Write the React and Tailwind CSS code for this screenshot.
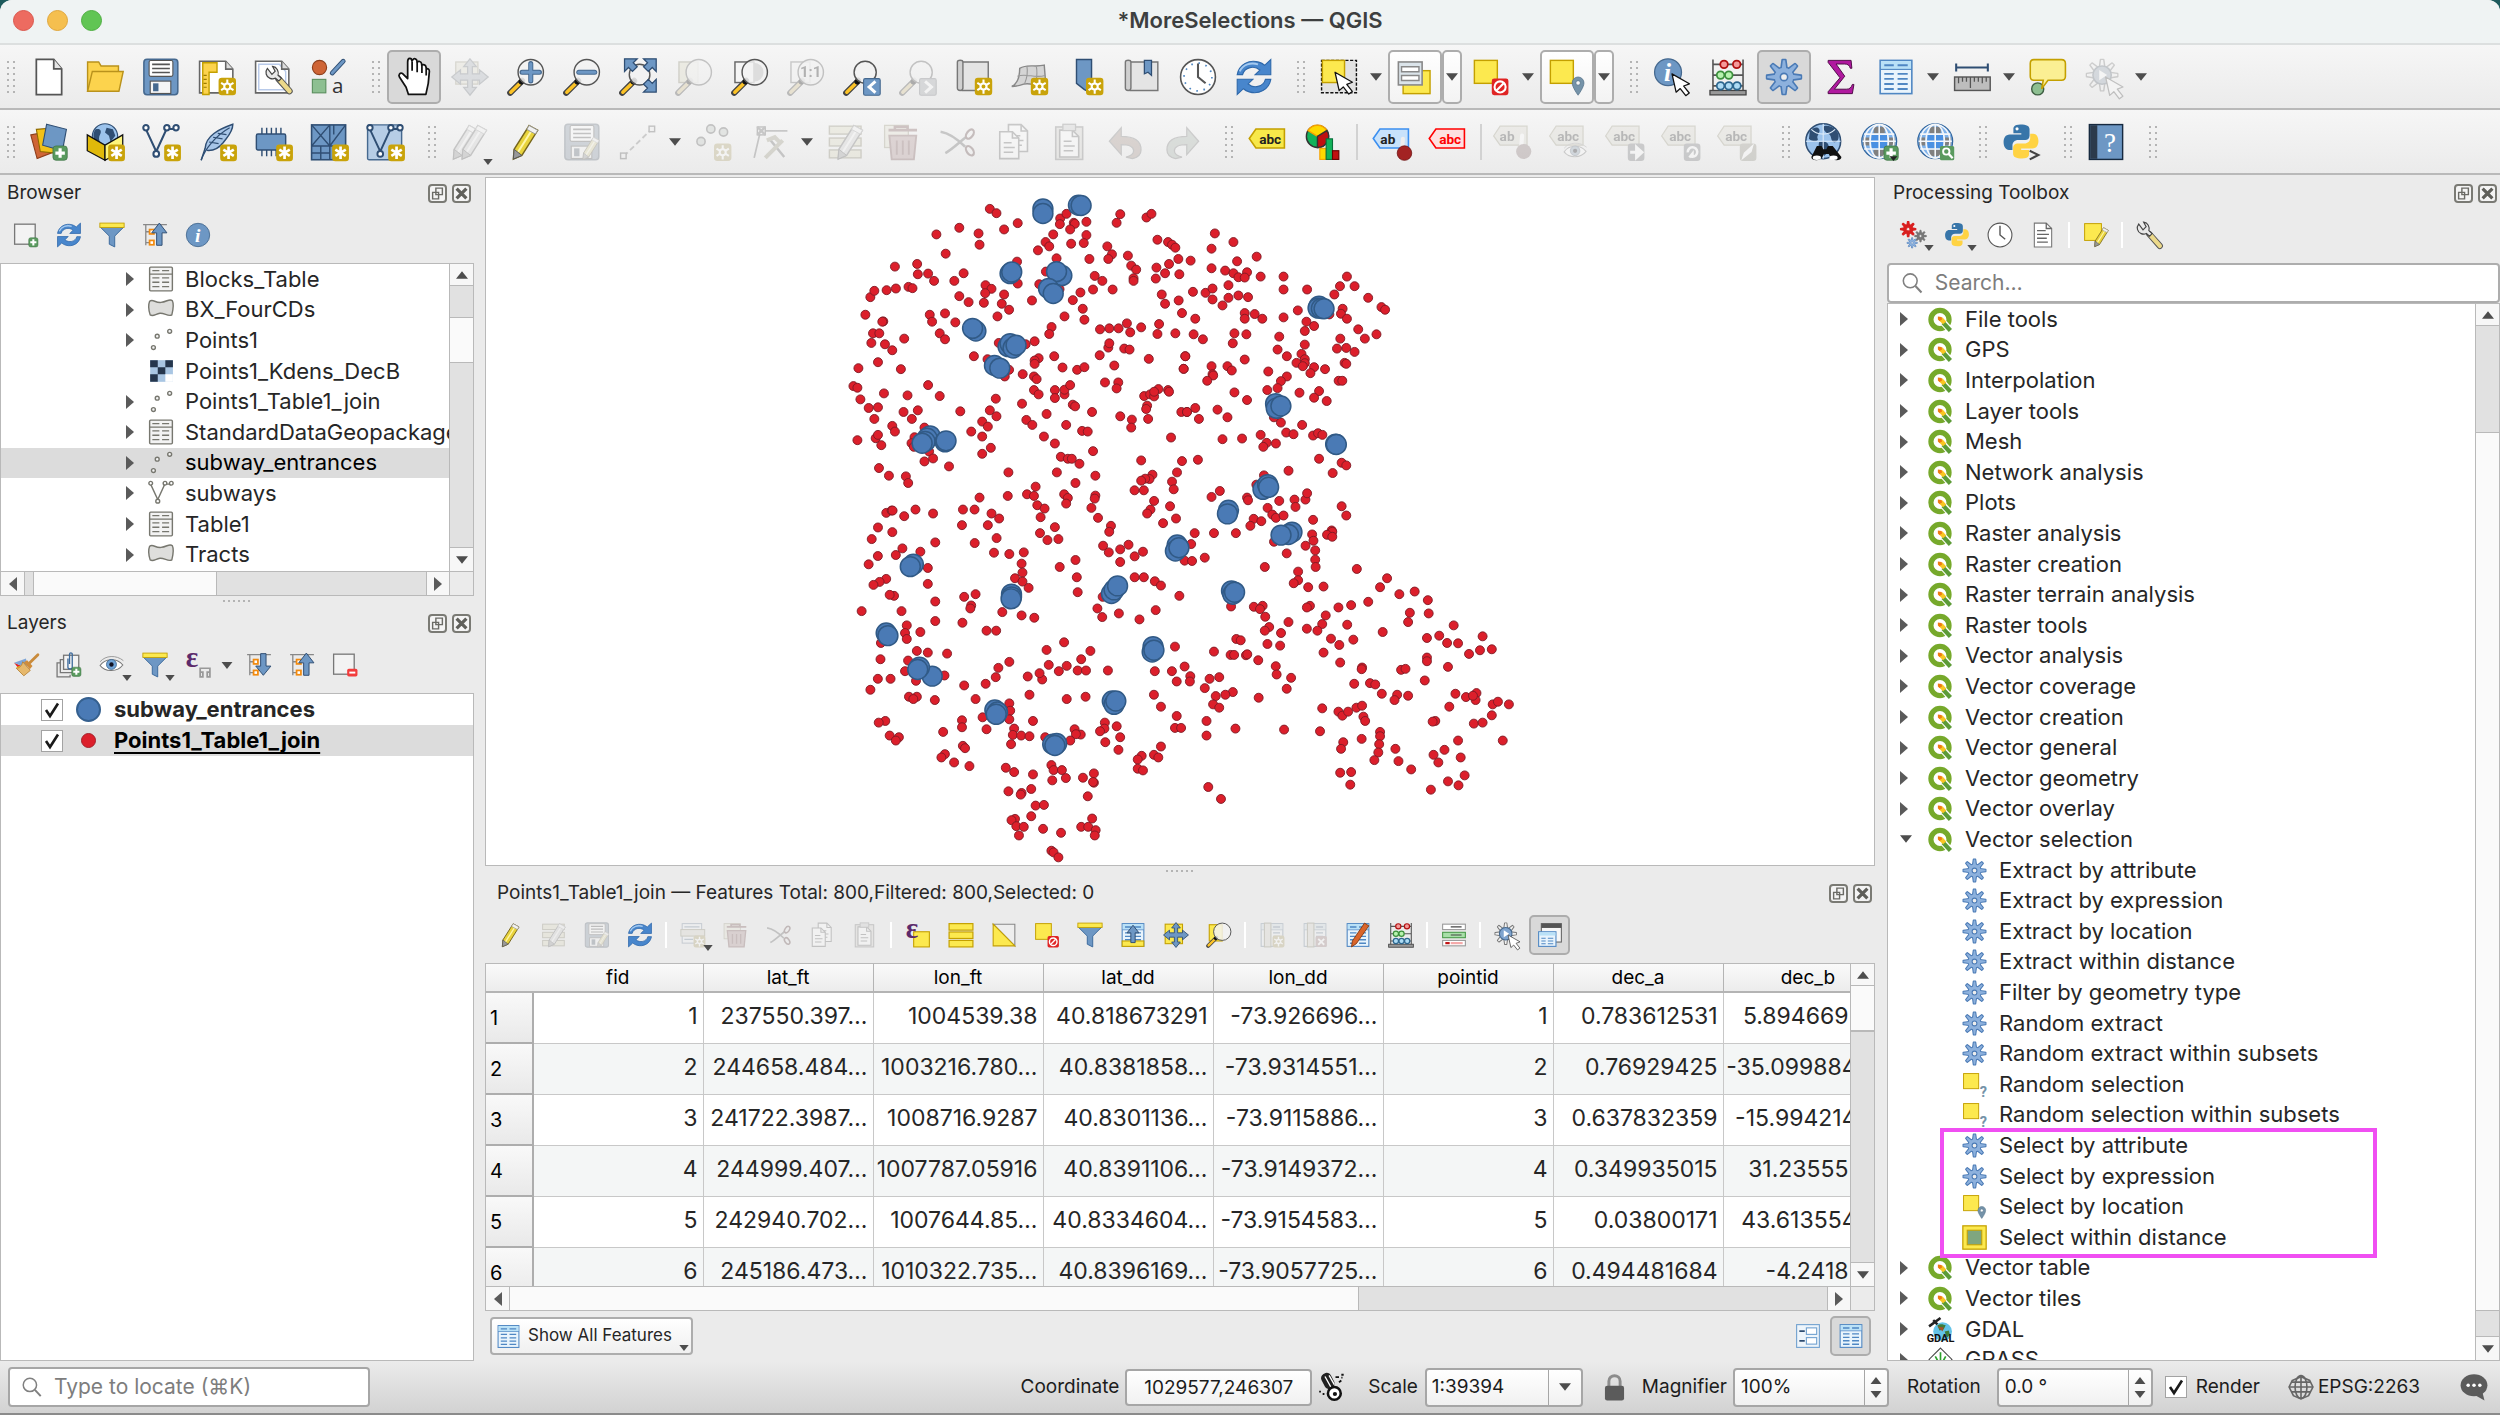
import React from "react";
import clsx from "clsx";

const BLUE = "#6d97c4";
const NAVY = "#2f4e73";
const YELLOW = "#fce94f";
const GOLD = "#c4a000";

// small marks that sit in the corner of other icons
const NewBadge = ({ x = 13, y = 13 }) => (
  <g transform={`translate(${x} ${y})`}>
    <rect width="10.6" height="10.6" rx="2" fill="#c9a30a" />
    <path d="M5.3 1.4v7.8M2 3.3l6.6 4M2 7.3l6.6-4" stroke="#fff" strokeWidth="1.7" />
  </g>
);

const AddBadge = ({ x = 14, y = 14, s = 1 }) => (
  <g transform={`translate(${x} ${y}) scale(${s})`}>
    <rect width="9.5" height="9.5" rx="2" fill="#5a9a5f" stroke="#3f7545" strokeWidth="0.5" />
    <path d="M4.75 1.6v6.3M1.6 4.75h6.3" stroke="#fff" strokeWidth="2.1" />
  </g>
);

const StarBadge = ({ x = 12.5, y = 12.5 }) => (
  <g transform={`translate(${x} ${y})`}>
    <rect width="11" height="11" rx="2" fill="#c9a30a" />
    <circle cx="5.5" cy="5.5" r="1.9" fill="none" stroke="#fff" strokeWidth="1.3" />
    <path d="M5.5 1v2.6M5.5 7.4V10M1.6 3.2l2.3 1.4M7.1 6.4l2.3 1.4M1.6 7.8l2.3-1.4M7.1 4.6l2.3-1.4" stroke="#fff" strokeWidth="1.3" />
  </g>
);

const Lens = ({ cx = 15, cy = 9, r = 8, children }) => (
  <g>
    <path d="M9.6 14.4L2 22" stroke="#444" strokeWidth="3.8" strokeLinecap="round" />
    <path d="M7.6 16.6L2.4 21.6" stroke="#fcc327" strokeWidth="2.2" strokeLinecap="round" />
    <circle cx="9" cy="15" r="1.7" fill="#111" />
    <circle cx={cx} cy={cy} r={r} fill="#f2f2f2" fillOpacity="0.85" stroke="#555" strokeWidth="0.9" />
    {children}
  </g>
);

const Pencil = () => (
  <g>
    <path d="M14 1.6l5.4 3L9.4 20.5 4 22.8l.5-6.2z" fill="#e8d33c" stroke="#77661c" strokeWidth="0.9" />
    <path d="M16.6 3L6.8 18.6" stroke="#fff6a8" strokeWidth="1.3" />
    <path d="M14 1.6l5.4 3-1.5 2.4-5.4-3z" fill="#f1f1f1" stroke="#999" strokeWidth="0.6" />
    <path d="M4.5 16.6l4.9 3.9L4 22.8z" fill="#999" stroke="#555" strokeWidth="0.6" />
  </g>
);

const Gear = ({ fill = "#8db1dd", stroke = "#4a7ab5" }) => {
  const teeth = [0, 45, 90, 135, 180, 225, 270, 315];
  return (
    <g>
      <g fill={stroke} stroke={stroke} strokeWidth="1.4" strokeLinejoin="round">
        {teeth.map((a) => (
          <path key={a} d="M10.2 7l.8-5.8h2l.8 5.8z" transform={`rotate(${a} 12 12)`} />
        ))}
        <circle cx="12" cy="12" r="6" />
      </g>
      <g fill={fill}>
        {teeth.map((a) => (
          <path key={a} d="M10.4 8l.9-6.6h1.4l.9 6.6z" transform={`rotate(${a} 12 12)`} />
        ))}
        <circle cx="12" cy="12" r="5.9" />
      </g>
      <circle cx="12" cy="12" r="2.3" fill="#eee" stroke={stroke} strokeWidth="1" />
    </g>
  );
};

const Cursor = ({ x = 11, y = 10, fill = "#fff", stroke = "#111" }) => (
  <path
    transform={`translate(${x} ${y})`}
    d="M0 0l2.6 11.6 2.6-2.3 3.5 4.5 2.2-1.7-3.5-4.4 3.6-1.4z"
    fill={fill}
    stroke={stroke}
    strokeWidth="0.8"
    strokeLinejoin="round"
  />
);

const LabelTag = ({ fill, stroke, color, text, tx = 14, children }) => (
  <g>
    <path d="M.8 9.8L5 3.800h18v12H5z" fill={fill} stroke={stroke} strokeWidth="1" />
    <text x={tx} y="13" fontSize="8.600" fontWeight="700" fontFamily="Roboto, sans-serif" textAnchor="middle" fill={color}>
      {text}
    </text>
    {children}
  </g>
);

const GreyTag = ({ text = "abc", tx = 12.2, children }) => (
  <g transform="translate(-2 0)">
    <path d="M.5 8.200L4.600 2h17v12h-17z" fill="#ddd8b8" stroke="#a39a5a" strokeWidth="0.800" />
    <text x={tx} y="11.200" fontSize="8.600" fontWeight="700" fontFamily="Roboto, sans-serif" textAnchor="middle" fill="#333">
      {text}
    </text>
    {children}
  </g>
);

const TableGlyph = ({ stroke = "#4f87c3", head = "#b9e1f7", fill = "#e9f4fc" }) => (
  <g>
    <rect x="2" y="1.5" width="20" height="21" fill={fill} stroke={stroke} strokeWidth="1" />
    <rect x="2.5" y="2" width="19" height="5" fill={head} />
    <path d="M2 7.2h20" stroke={stroke} strokeWidth="0.7" />
    <path d="M4.6 4.6h6M13 4.6h6.4M4.6 10h6M13 10h6.4M4.6 13.2h6M13 13.2h6.4M4.6 16.4h6M13 16.4h6.4M4.6 19.6h6M13 19.6h6.4" stroke={stroke} strokeWidth="1.2" />
  </g>
);

const Globe = ({ children }) => (
  <g>
    <circle cx="11.5" cy="11.5" r="11" fill="#7fb2ea" stroke="#33679f" strokeWidth="0.8" />
    <path d="M8 2.4h7v4.2H8zM8 16.8h7V21H8zM1.4 9.2h4v5h-4zM17.6 9.2h4v5h-4z" fill="#808080" />
    <rect x="6.5" y="7" width="10" height="9.4" fill="#4a90e2" />
    <g fill="none" stroke="#f3f6fa" strokeWidth="1">
      <ellipse cx="11.5" cy="11.5" rx="5.8" ry="10.6" />
      <ellipse cx="11.5" cy="11.5" rx="9.3" ry="10.6" />
      <path d="M11.5 1v21M2 7h19M1 11.5h21M2 16.4h19" />
    </g>
    {children}
  </g>
);

const Python = ({ children }) => (
  <g>
    <path d="M11.6 1C7.4 1 7.2 2.8 7.2 4v2.4h5v.9H4.9C2.2 7.3 1 9.6 1 12.2s1.3 4.8 3.4 4.8h2.2v-2.8c0-2 1.6-3.4 3.6-3.4h4.5c1.5 0 2.7-1.2 2.7-2.8V4c0-2-1.800-3-5.800-3z" fill="#3775a9" />
    <path d="M12.700 22.400c4.200 0 4.400-1.800 4.400-3V17h-5v-.9h7.200c2.600 0 3.700-2.200 3.700-4.700 0-2.600-1.200-4.600-3.300-4.600h-1.900v2.600c0 2-1.600 3.500-3.600 3.500H9.700c-1.500 0-2.700 1.200-2.700 2.700v3.800c0 2 1.800 3 5.700 3z" fill="#ffd343" />
    <circle cx="9.500" cy="3.700" r="1" fill="#fff" />
    {children}
  </g>
);

const Page = ({ x = 0, y = 0 }) => (
  <g transform={`translate(${x} ${y})`}>
    <path d="M2 1h8l4 4v13H2z" fill="#fff" stroke="#666" strokeWidth="1" />
    <path d="M10 1v4h4M4.500 8h5M4.500 11h7M4.500 14h6" fill="none" stroke="#666" strokeWidth="1" />
  </g>
);

const Floppy = ({ children }) => (
  <g>
    <rect x="1.200" y=".8" width="21.400" height="22.400" rx="2" fill={BLUE} stroke="#46698f" strokeWidth="1" />
    <rect x="4.500" y="1.600" width="15" height="10" rx="1" fill="#fff" stroke="#555" strokeWidth="0.700" />
    <path d="M6.400 4h11.200M6.400 6.600h11.200M6.400 9.200h11.200" stroke="#555" strokeWidth="1" />
    <rect x="5.200" y="14.600" width="13" height="7.800" fill="#f5f5f5" stroke="#555" strokeWidth="0.700" />
    <rect x="7" y="16" width="3.400" height="5" fill="#46698f" />
    {children}
  </g>
);

const Refresh = () => (
  <g fill="#4886cc" stroke="#2f69ab" strokeWidth="0.700">
    <path d="M1.400 10.500C2.500 4 9 .8 15 2.600c1.400.4 2.700 1.100 3.700 2L22.600 1v9.600h-9.900l3-3C12.400 4.600 6 5.600 4.800 10.500z" />
    <path d="M22.600 13.500C21.500 20 15 23.200 9 21.400c-1.400-.4-2.700-1.100-3.700-2L1.400 23v-9.600h9.900l-3 3c3.300 3 9.700 2 10.900-2.900z" />
    <path d="M3 8.500C5 4 10 2.600 14.500 4" stroke="#a5caf0" strokeWidth="1.200" fill="none" />
  </g>
);

const Funnel = ({ children }) => (
  <g>
    <path d="M1 4.500h22L14.500 13v10l-5-2.500V13z" fill={BLUE} stroke="#3c6a9c" strokeWidth="0.900" />
    <rect x=".8" y="1" width="22.400" height="4" fill={YELLOW} stroke={GOLD} strokeWidth="0.800" />
    {children}
  </g>
);

const Wrench = () => (
  <g>
    <path d="M11.500 10.500L20 20" stroke="#555" strokeWidth="5" strokeLinecap="round" />
    <path d="M12.500 11.500L20 20" stroke="#ecd98a" strokeWidth="3.500" strokeLinecap="round" />
    <path d="M3 2.500C1 5 1.800 9 5 10.200c1.500.6 3 .5 4.200-.2l2.600 2.200 2-2-2.600-2.400C12 5 10.500 1.400 7 1l2 3.600-2.500 2.600z" fill="#e8e8e8" stroke="#444" strokeWidth="0.900" />
  </g>
);

const Abacus = () => (
  <g>
    <path d="M2.500 1v20M21.500 1v20M2.500 4h19M2.500 10.800h19M2.500 17.600h19" stroke="#555" strokeWidth="1" />
    <rect x=".6" y="20.500" width="22.800" height="2.800" fill="#999" stroke="#444" strokeWidth="0.800" />
    <g fill="#f59a9a" stroke="#b01111" strokeWidth="1.100">
      <circle cx="9.500" cy="4" r="2.400" />
      <circle cx="17.500" cy="4" r="2.400" />
    </g>
    <g fill="#b7f2ae" stroke="#3c8f3c" strokeWidth="1.100">
      <circle cx="7.300" cy="10.800" r="2.400" />
      <circle cx="12.500" cy="10.800" r="2.400" />
    </g>
    <g fill="#aedcf5" stroke="#2d678f" strokeWidth="1.100">
      <circle cx="7.300" cy="17.600" r="2.400" />
      <circle cx="12.500" cy="17.600" r="2.400" />
      <circle cx="17.700" cy="17.600" r="2.400" />
    </g>
  </g>
);

const Trash = () => (
  <g>
    <rect x="1" y="1.500" width="15" height="14" fill="#e8e1b0" stroke="#a29a55" strokeWidth="0.800" />
    <path d="M7.500 4.500V2.400h8v2.100M3.500 4.500h18" stroke="#b04a4a" strokeWidth="1.600" fill="none" />
    <path d="M4 8h17l-1.500 15h-14z" fill="#d98888" stroke="#b04a4a" strokeWidth="1.200" />
    <path d="M8.700 11v9M12.500 11v9M16.300 11v9" stroke="#b04a4a" strokeWidth="1.200" />
  </g>
);

const Scissors = () => (
  <g fill="none" stroke="#666">
    <path d="M1 5.500c6 1 11 5 15.500 9.500M4 19c4-2 9-7 13.500-10.500" strokeWidth="1.600" />
    <ellipse cx="19.500" cy="7" rx="2" ry="3.300" transform="rotate(35 19.500 7)" stroke="#8a3a3a" strokeWidth="1.400" />
    <ellipse cx="19.500" cy="17.500" rx="2" ry="3.300" transform="rotate(-35 19.500 17.500)" stroke="#8a3a3a" strokeWidth="1.400" />
  </g>
);

const Bars = () => (
  <g fill="#e4dc92" stroke="#8f8544" strokeWidth="0.900">
    <rect x="1.500" y="2" width="20" height="5" />
    <rect x="1.500" y="9.500" width="20" height="5" />
    <rect x="1.500" y="17" width="20" height="5" />
  </g>
);

const NoEntry = ({ x = 13, y = 13 }) => (
  <g transform={`translate(${x} ${y})`}>
    <rect width="10.500" height="10.500" rx="1.500" fill="#e02424" />
    <circle cx="5.250" cy="5.250" r="3.500" fill="none" stroke="#fff" strokeWidth="1.300" />
    <path d="M3 7.500L7.500 3" stroke="#fff" strokeWidth="1.300" />
  </g>
);

const Pin = ({ x = 14, y = 12 }) => (
  <path
    transform={`translate(${x} ${y})`}
    d="M4 0a3.700 3.700 0 0 0-3.700 3.800C.3 6.500 4 11.500 4 11.500s3.700-5 3.700-7.700A3.700 3.700 0 0 0 4 0zm0 2.300a1.400 1.400 0 1 1 0 2.900 1.400 1.400 0 0 1 0-2.900z"
    fill="#7593a9"
    stroke="#56738a"
    strokeWidth="0.500"
  />
);

const TreeArrow = ({ down }) => (
  <g>
    <path d="M1 2.500h22M3.500 2.500v19M3.500 9h5M3.500 19h5" stroke="#888" strokeWidth="1.200" fill="none" />
    <rect x="7" y="7" width="4" height="4" fill="#fff" stroke="#f28a0e" strokeWidth="1.600" />
    <rect x="7" y="17" width="4" height="4" fill="#fff" stroke="#f28a0e" strokeWidth="1.600" />
    <path
      d={down ? "M13.500 1.500h5V13H23l-7 8.500L9 13h4.500z" : "M13.500 21.500h5V10H23L16 1 9 10h4.500z"}
      fill={BLUE}
      stroke={NAVY}
      strokeWidth="0.900"
    />
  </g>
);

const Eye = () => (
  <g>
    <path d="M1 12.500C5.500 6 16 5 22 12c-5 6.500-16 7-21 .5z" fill="#fff" stroke="#777" strokeWidth="1" />
    <circle cx="11.500" cy="11.500" r="4.600" fill="#6fa3d6" stroke="#355f8a" strokeWidth="0.700" />
    <circle cx="11.500" cy="11.500" r="2" fill="#112" />
    <path d="M1 9C6 3 16 2.500 22.500 8" fill="none" stroke="#999" strokeWidth="0.900" />
  </g>
);

const SelectBox = ({ w = 14.500 }) => <rect x="1.500" y="1.500" width={w} height={w} fill={YELLOW} stroke={GOLD} strokeWidth="0.900" />;

const VLine = ({ color = NAVY, w = 1.300 }) => (
  <g fill="none" stroke={color} strokeWidth={w}>
    <path d="M2.500 4L9 18l6.500-14.200h5" />
    <g fill="#fff">
      <circle cx="2.500" cy="3" r="1.700" />
      <circle cx="9" cy="19.500" r="1.800" />
      <circle cx="15.700" cy="3" r="1.700" />
      <circle cx="21.500" cy="3" r="1.700" />
    </g>
  </g>
);

const Clock = ({ ticks }) => (
  <g>
    <circle cx="12" cy="12" r="11" fill="#fff" stroke="#555" strokeWidth="1" />
    {ticks && <circle cx="12" cy="12" r="8.800" fill="none" stroke="#4f87c3" strokeWidth="1.100" strokeDasharray="1 3.608" />}
    <path d="M12 3.500V12l4.800 4" fill="none" stroke="#555" strokeWidth="1.300" />
  </g>
);

const ICONS = {
  newFile: (
    <g>
      <path d="M4 .8h11l5 6v16.400H4z" fill="#fff" stroke="#555" strokeWidth="1.100" />
      <path d="M15 .8v6h5" fill="#e5e5e5" stroke="#555" strokeWidth="1.100" />
    </g>
  ),
  open: (
    <g fill="#fcd34d" stroke="#b9921c" strokeWidth="0.900">
      <path d="M1 21V2.500h7L9.500 5h11v5" />
      <path d="M1 21L4 8.500h19.500L20.800 21z" />
    </g>
  ),
  save: <Floppy />,
  layout: (
    <g>
      <path d="M1 2h16.500L22 7v15H1z" fill="#fff" stroke="#666" strokeWidth="1" />
      <path d="M17.500 2v5H22" fill="#ddd" stroke="#666" />
      <path d="M3 3h9v6H7v14H3z" fill="#fcd34d" stroke={GOLD} strokeWidth="0.900" />
      <path d="M3.500 11H5.500M3.500 13.500H5.500M3.500 16H5.500M3.500 18.500H5.500" stroke="#9a7b00" strokeWidth="0.700" />
      <StarBadge x={13} />
    </g>
  ),
  manager: (
    <g>
      <path d="M1 2h16.500L22 7v15H1z" fill="#fff" stroke="#666" strokeWidth="1" />
      <path d="M3 4h13l4 4.500V20H3z" fill="none" stroke="#b8caea" strokeWidth="0.900" />
      <path d="M17.500 2v5H22" fill="#ddd" stroke="#666" />
      <g transform="translate(6 4.500) scale(.82)">
        <Wrench />
      </g>
    </g>
  ),
  style: (
    <g>
      <ellipse cx="6" cy="6" rx="4.500" ry="4.500" fill="#cf6536" stroke="#8e3f1c" strokeWidth="0.700" />
      <path d="M14 9.500L21 2" stroke={NAVY} strokeWidth="3" strokeLinecap="round" />
      <path d="M14 9.500L21 2" stroke={BLUE} strokeWidth="1.800" strokeLinecap="round" />
      <rect x="1.500" y="13.500" width="8.500" height="8.500" fill="#8dbf91" stroke="#5a8f5e" strokeWidth="0.700" />
      <text x="17.500" y="22" fontSize="13" fontFamily="Open Sans, sans-serif" textAnchor="middle" fill="#333">
        a
      </text>
    </g>
  ),
  hand: (
    <path
      d="M8.500 23L7 18.500 2.800 12c-.8-1.300.3-3 2-2.200L8 13V2.500C8-.4 10.500-.3 10.700 2l.5-.8c.8-1.300 2.500-.8 2.700.8v.8c.9-1.200 2.600-.7 2.900.8l.1 1.100c.9-.9 2.500-.4 2.700 1.100l.1 1c1.200-.3 2 .4 2 1.600L21 16l-1.500 7zM10.800 2.500V8M14 3v6M17 4.500V9.500M19.700 7v4"
      fill="#fff"
      stroke="#111"
      strokeWidth="1.100"
      strokeLinejoin="round"
    />
  ),
  pan: (
    <g>
      <rect x="3" y="2.500" width="14" height="14" fill="#e6dfae" stroke="#a39a5a" strokeWidth="0.800" />
      <path d="M12 .5l4 5h-2.500V10H18V7.500l5.500 4.500L18 16.500V14h-4.500v4.500H16l-4 5-4-5h2.500V14H6v2.500L.5 12 6 7.500V10h4.500V5.500H8z" fill="#9fb3cb" stroke="#66788f" strokeWidth="0.800" />
    </g>
  ),
  zoomIn: (
    <Lens>
      <path d="M15 3.500v11M9.500 9h11" stroke="#46698f" strokeWidth="3.200" strokeLinecap="round" />
      <path d="M15 3.700v10.600M9.700 9h10.600" stroke={BLUE} strokeWidth="2" strokeLinecap="round" />
    </Lens>
  ),
  zoomOut: (
    <Lens>
      <path d="M10 9h10" stroke="#46698f" strokeWidth="3.200" strokeLinecap="round" />
      <path d="M10 9h10" stroke={BLUE} strokeWidth="2" strokeLinecap="round" />
    </Lens>
  ),
  zoomFull: (
    <g>
      <Lens cx={13} cy={10.500} r={6.500} />
      <g fill={BLUE} stroke={NAVY} strokeWidth="0.800">
        <path d="M3.500 0.500h8L9 3l2.500 2.500-3 3L6 6 3.500 8.500zM23.500 .5v8L21 6l-2.500 2.500-3-3L18 3 15.500.5zM23.500 21.500h-8L18 19l-2.500-2.500 3-3L21 16l2.500-2.500z" />
      </g>
    </g>
  ),
  zoomSel: (
    <g>
      <rect x="2.500" y="2.500" width="12" height="13" fill="#e4dc92" stroke="#8f8544" strokeWidth="0.900" />
      <Lens />
    </g>
  ),
  zoomLayer: (
    <g>
      <rect x="2.500" y="2.500" width="12" height="13" fill="#f5f5f5" stroke="#666" strokeWidth="0.900" />
      <Lens>
        <path d="M14.500 3v12a6 6 0 0 0 0-12z" fill="#ddd" />
      </Lens>
    </g>
  ),
  zoomNative: (
    <g>
      <rect x="2.500" y="2.500" width="12" height="13" fill="#f5f5f5" stroke="#666" strokeWidth="0.900" />
      <Lens>
        <text x="15" y="12.300" fontSize="9.500" fontWeight="700" textAnchor="middle" fill="#222" fontFamily="Roboto, sans-serif">
          1:1
        </text>
      </Lens>
    </g>
  ),
  zoomLast: (
    <g>
      <Lens cx={14} r={7} />
      <rect x="13" y="13" width="10.500" height="10.500" rx="1" fill={BLUE} stroke="#46698f" strokeWidth="0.700" />
      <path d="M20.500 14.800l-4 3.500 4 3.500" fill="none" stroke="#fff" strokeWidth="1.900" />
    </g>
  ),
  zoomNext: (
    <g>
      <Lens cx={14} r={7} />
      <rect x="13" y="13" width="10.500" height="10.500" rx="1" fill="#9aa4b0" stroke="#6a7480" strokeWidth="0.700" />
      <path d="M16.500 14.800l4 3.500-4 3.500" fill="none" stroke="#fff" strokeWidth="1.900" />
    </g>
  ),
  newMap: (
    <g>
      <path d="M4.500 2.500H21v18H4.500z" fill="#e4e4e4" stroke="#777" strokeWidth="0.900" />
      <path d="M1.500 2.500c0-1.500 3.500-1.500 3.500 0V19c0 2-3.500 2-3.500 0z" fill="#d0d0d0" stroke="#777" strokeWidth="0.900" />
      <StarBadge />
    </g>
  ),
  new3d: (
    <g>
      <path d="M.5 18c4-2 5-6 5-11.500 5-3 9-.5 15.500-2L22 17c-6 2-9-2-14-.5-3 1-5 1.500-7.500 1.500z" fill="#d5d5d5" stroke="#888" strokeWidth="0.900" />
      <path d="M4 11.500c6-2 11 1.500 17.500-.5M10 5c1 5 0 8-1.500 11.500M16 5.500c1 4 0 8-.5 12" fill="none" stroke="#999" strokeWidth="0.700" />
      <StarBadge />
    </g>
  ),
  newBookmark: (
    <g>
      <path d="M6 1h9.500v21l-4.500-2-5-4z" fill={BLUE} stroke={NAVY} strokeWidth="0.900" />
      <StarBadge x={12} />
    </g>
  ),
  bookmarks: (
    <g>
      <path d="M4.500 2.500H22v18H4.500z" fill="#e4e4e4" stroke="#777" strokeWidth="0.900" />
      <path d="M1.500 2.500c0-1.500 3.500-1.500 3.500 0V19c0 2-3.500 2-3.500 0z" fill="#d0d0d0" stroke="#777" strokeWidth="0.900" />
      <path d="M13.500 1.500h4.500v9.500l-2.200-2-2.300 1z" fill={BLUE} stroke={NAVY} strokeWidth="0.800" />
    </g>
  ),
  clock: <Clock ticks />,
  refresh: <Refresh />,
  select: (
    <g>
      <rect x="1" y="1.500" width="22" height="20.500" fill="#e2e2e2" stroke="#111" strokeWidth="0.900" strokeDasharray="2 1" />
      <SelectBox w={14} />
      <Cursor x={9.500} y={9} />
    </g>
  ),
  selectForm: (
    <g>
      <rect x="4.500" y="8" width="17" height="14.500" fill={YELLOW} stroke={GOLD} strokeWidth="0.900" />
      <rect x="1.500" y="2.500" width="15" height="14.500" fill="#dbe4ea" stroke="#888" strokeWidth="1" />
      <path d="M3.500 5.500h11v3.200h-11zM3.500 11h11v3.200h-11z" fill="#fff" stroke="#888" strokeWidth="0.900" />
    </g>
  ),
  deselect: (
    <g>
      <SelectBox />
      <NoEntry x={12.500} />
    </g>
  ),
  selectLoc: (
    <g>
      <SelectBox />
      <Pin x={15} y={12} />
    </g>
  ),
  info: (
    <g>
      <circle cx="9.500" cy="9" r="8.500" fill={BLUE} stroke="#46698f" strokeWidth="0.800" />
      <text x="9.200" y="14.500" fontSize="16" fontWeight="700" fontStyle="italic" fontFamily="Liberation Serif, serif" textAnchor="middle" fill="#fff">
        i
      </text>
      <Cursor x={12} y={10} />
    </g>
  ),
  abacus: <Abacus />,
  gear: <Gear />,
  sigma: (
    <path d="M4.500 1.500h14.500l.5 5h-1c-.6-2-1.600-2.700-3.500-2.700H9.500L15 11.500 8.500 19.700h7.500c2 0 3-.8 3.800-3h1l-1 5.800H4.500v-1.200L12 12.500 4.500 2.800z" fill="#b0199f" stroke="#4c0a45" strokeWidth="0.600" />
  ),
  table: <TableGlyph />,
  measure: (
    <g>
      <path d="M2 6h20M2 3.500v5M22 3.500v5" stroke={NAVY} strokeWidth="1.300" />
      <rect x="1" y="12" width="22.500" height="8.500" fill="#bdbdbd" stroke="#555" strokeWidth="0.900" />
      <path d="M3.500 12v4M6 12v3M8.500 12v3M11 12v7M13.500 12v3M16 12v3M18.500 12v4M21 12v3" stroke="#555" strokeWidth="0.800" />
    </g>
  ),
  tip: (
    <g>
      <circle cx="5.500" cy="19.500" r="3.800" fill="#8dbf91" stroke="#3f5f43" strokeWidth="0.900" />
      <path d="M3 1h17.500c1.500 0 2.500 1 2.500 2.500v8c0 1.500-1 2.500-2.500 2.500H12l-4 5.500L9 14H3C1.500 14 .8 13 .8 11.500v-8C.8 2 1.500 1 3 1z" fill="#fbef93" stroke={GOLD} strokeWidth="1" />
    </g>
  ),
  gearPlay: (
    <g>
      <g transform="scale(.9)">
        <Gear fill="#f2f2f2" stroke="#777" />
      </g>
      <circle cx="10.800" cy="10.800" r="5.800" fill="#7fa4cf" stroke="#46698f" />
      <path d="M9 7.500v6.600l5-3.300z" fill="#fff" />
      <Cursor x={13} y={12} stroke="#555" />
    </g>
  ),
  dataSource: (
    <g>
      <path d="M.5 7.500l11-2 3 13-10 4z" fill="#cf6536" stroke="#8e3f1c" strokeWidth="0.700" />
      <path d="M4 4l12-1v16l-9.500-1z" fill="#f2c118" stroke="#8e6a00" strokeWidth="0.700" />
      <path d="M10.500 .8L23 4l-2.500 13.500L8 14z" fill={BLUE} stroke={NAVY} strokeWidth="0.700" />
      <AddBadge x={14.500} y={14.500} s={0.950} />
    </g>
  ),
  geopackage: (
    <g>
      <circle cx="12" cy="8.500" r="8" fill="#9cc3ec" stroke={NAVY} strokeWidth="0.700" />
      <path d="M6 4c3-1 4 1 3 3s-1 4 0 5H6C4 9 4.500 6 6 4zM13 3l4 1 1.500 4-3 4-1-4-2.500-2z" fill={NAVY} />
      <path d="M.8 7.500L12 14v9.500L.8 17.500z" fill="#e0b90a" stroke="#111" strokeWidth="0.800" />
      <path d="M23.200 7.500L12 14v9.500l11.200-6z" fill="#fdf57c" stroke="#111" strokeWidth="0.800" />
      <NewBadge x={14} y={13.500} />
    </g>
  ),
  shapefile: (
    <g>
      <VLine />
      <NewBadge x={14} y={13.500} />
    </g>
  ),
  feather: (
    <g>
      <path d="M2 23.500L4.500 16C5 8 13 4 22 .8c0 5-3.500 8-6 11.500-2.500 3.200-6 5.500-10.500 5" fill="#a8c6e8" stroke={NAVY} strokeWidth="0.900" />
      <path d="M2 23.500C4 17 11 8 20 3M7 12l6 1M9.500 9l6 1M12.500 6.500l5.500.8" fill="none" stroke={NAVY} strokeWidth="0.800" />
      <NewBadge x={14} y={13.500} />
    </g>
  ),
  memory: (
    <g>
      <path d="M5 3v18M8 3v18M11 3v18M14 3v18M17 3v10" stroke={NAVY} strokeWidth="0.900" />
      <rect x="1.500" y="7" width="18.500" height="10" rx="1" fill={BLUE} stroke={NAVY} strokeWidth="0.900" />
      <NewBadge x={14} y={13.500} />
    </g>
  ),
  virtual: (
    <g>
      <rect x="1" y="1.200" width="21.500" height="22" fill={BLUE} stroke={NAVY} strokeWidth="1" />
      <path d="M1 14.500h21.500M12.500 1.200v22M1 1.200l11.500 13.300M12.500 1.200L1 14.500M22.500 1.200l-10 13.300M15 1.200v6M6.800 14.500v8.700M1 19h11.500" stroke={NAVY} strokeWidth="0.900" />
      <NewBadge x={14} y={13.500} />
    </g>
  ),
  mesh: (
    <g>
      <rect x="1" y="1.200" width="21.500" height="22" rx="1" fill="#b6cde6" stroke="#46698f" strokeWidth="0.900" />
      <VLine w={1.200} />
      <NewBadge x={14} y={13.500} />
    </g>
  ),
  pencils: (
    <g>
      <g transform="translate(-2.500 0)" className="grayscale">
        <Pencil />
      </g>
      <g transform="translate(3 0)" className="grayscale">
        <Pencil />
      </g>
    </g>
  ),
  pencil: <Pencil />,
  saveEdits: (
    <Floppy>
      <g transform="translate(10 8) scale(.66)">
        <Pencil />
      </g>
    </Floppy>
  ),
  digitize: (
    <g>
      <path d="M3 21L20.500 4" stroke="#777" strokeWidth="1.200" strokeDasharray="3.500 2" />
      <rect x="1" y="19" width="3.500" height="3.500" fill="#eee" stroke="#555" strokeWidth="0.900" />
      <rect x="19" y="2" width="3.500" height="3.500" fill="#eee" stroke="#555" strokeWidth="0.900" />
    </g>
  ),
  addPoint: (
    <g>
      <g fill="#b5c9b7" stroke="#555" strokeWidth="1">
        <circle cx="10" cy="3.800" r="2.600" />
        <circle cx="18" cy="5.700" r="2.600" />
        <circle cx="3.800" cy="11.700" r="2.600" />
      </g>
      <StarBadge x={12} y={13} />
    </g>
  ),
  vertex: (
    <g>
      <path d="M2 22L6 5h17" fill="none" stroke="#666" strokeWidth="1.100" />
      <rect x="4" y="2.500" width="5" height="5" fill="#eee" stroke="#555" strokeWidth="0.900" />
      <path d="M4 2.500l5 5M9 2.500l-5 5M12 10.500l9 11" stroke="#666" strokeWidth="1.500" />
      <path d="M20 11L9 22M10 11l5-2 4 4" stroke="#a39a5a" strokeWidth="2.600" fill="none" />
    </g>
  ),
  multiEdit: (
    <g>
      <Bars />
      <g className="grayscale" transform="translate(3 0)">
        <Pencil />
      </g>
    </g>
  ),
  trash: <Trash />,
  cut: <Scissors />,
  copy: (
    <g>
      <Page x={6.500} />
      <Page x={1} y={4.500} />
    </g>
  ),
  paste: (
    <g>
      <rect x="3" y="2.500" width="17" height="20.500" fill="#d8d4c6" stroke="#777" strokeWidth="1" />
      <g transform="translate(3.500 3.500)">
        <Page />
      </g>
      <rect x="7.500" y=".8" width="8" height="4" fill="#ccc" stroke="#777" strokeWidth="0.800" />
    </g>
  ),
  undo: <path d="M1.500 11.500L9 3v5.500c8 0 12.500 3 12.500 8.500 0 3-2 4.700-5.500 5.500l-4-1c3.500-.8 4.800-2 4.800-4 0-2.500-2.500-3.800-7.800-3.800V20z" fill="#c0896e" stroke="#777" strokeWidth="0.800" />,
  redo: <path d="M22.500 11.500L15 3v5.500c-8 0-12.500 3-12.500 8.500 0 3 2 4.700 5.500 5.500l4-1c-3.500-.8-4.800-2-4.800-4 0-2.500 2.500-3.800 7.800-3.800V20z" fill="#97b59b" stroke="#777" strokeWidth="0.800" />,
  label: <LabelTag fill="#f7e84a" stroke={GOLD} color="#222" text="abc" />,
  diagram: (
    <g>
      <circle cx="8.500" cy="8.500" r="7" fill="#12b25a" stroke="#333" strokeWidth="0.900" />
      <path d="M8.500 8.500L2.500 4.800A7 7 0 0 1 14.500 4.800z" fill="#fdd800" stroke="#f5a100" strokeWidth="0.900" />
      <path d="M8.500 8.500l6-3.700a7 7 0 0 1-6 10.700z" fill="#c01010" stroke="#333" strokeWidth="0.900" />
      <rect x="10" y="16" width="4" height="7" fill="#fdd800" stroke="#f5a100" strokeWidth="0.700" />
      <rect x="14" y="10" width="4" height="13" fill="#12b25a" stroke="#06703a" strokeWidth="0.700" />
      <rect x="18" y="17.500" width="4" height="5.500" fill="#c01010" stroke="#600" strokeWidth="0.700" />
    </g>
  ),
  labelPin: (
    <LabelTag fill="#c8e2fb" stroke="#3b8ff0" color="#222" text="ab" tx={10}>
      <path d="M19.500 10l-.5 7" stroke="#eee" strokeWidth="2.600" strokeLinecap="round" />
      <circle cx="20.500" cy="19" r="4.600" fill="#a32323" stroke="#6d1212" strokeWidth="0.500" />
    </LabelTag>
  ),
  labelRed: <LabelTag fill="#fde0e0" stroke="#f00" color="#f00" text="abc" />,
  tagPin: (
    <GreyTag text="ab" tx={9}>
      <path d="M18.500 8l-.5 6" stroke="#fff" strokeWidth="2.600" strokeLinecap="round" />
      <circle cx="19.500" cy="18" r="4.800" fill="#a36b6b" />
    </GreyTag>
  ),
  tagEye: (
    <GreyTag>
      <g transform="translate(9 10) scale(.66)">
        <Eye />
      </g>
    </GreyTag>
  ),
  tagMove: (
    <GreyTag>
      <rect x="14.500" y="13" width="10.500" height="11" rx="2" fill="#70777e" />
      <path d="M16 18.500h4.500M20 15.300l3.500 3.200-3.500 3.300z" stroke="#fff" strokeWidth="1.800" fill="#fff" />
    </GreyTag>
  ),
  tagRotate: (
    <GreyTag>
      <rect x="14.500" y="13" width="10.500" height="11" rx="2" fill="#70777e" />
      <path d="M17 18.500a3 3 0 1 1 3 2.800v-2l-2 2.500" stroke="#fff" strokeWidth="1.600" fill="none" />
    </GreyTag>
  ),
  tagEdit: (
    <GreyTag>
      <rect x="14.500" y="13" width="10.500" height="11" rx="2" fill="#96906a" />
      <path d="M16.500 22l1-3 5-4.500-1 3.500z" fill="#fff" stroke="#fff" />
    </GreyTag>
  ),
  metasearch: (
    <g>
      <circle cx="11.500" cy="11.500" r="11" fill="#9cc3ec" stroke={NAVY} strokeWidth="1" />
      <path d="M3 5c2-2 5-3 6-1s-2 4-1 6-4 2-5.500 0zM12 2c4-1 8 2 9 5s-1 6-3 5-1-4-3-5-4-3-3-5zM9 12c3-1 6 0 6 3s-2 6-4 6-3-7-2-9z" fill={NAVY} />
      <path d="M11.500 .5v22M.5 11.500h22M4 4c4 4 11 4 15 0" stroke="#dcebfa" strokeWidth="0.700" fill="none" />
      <path d="M7.500 14.500h3l1 2h2l1-2h3l5.500 7c0 2.500-5.500 3-7 0l-1-2h-3l-1 2c-1.500 3-7 2.500-7 0z" fill="#111" />
      <ellipse cx="7.500" cy="22" rx="2.600" ry="1.400" fill="#fff" />
      <ellipse cx="18" cy="22" rx="2.600" ry="1.400" fill="#fff" />
    </g>
  ),
  globeAdd: (
    <Globe>
      <AddBadge x={14.500} y={14.500} s={0.950} />
      <path d="M18 21h5l-2.500 3z" fill="#222" />
    </Globe>
  ),
  globeSearch: (
    <Globe>
      <rect x="14.500" y="14.500" width="9" height="9" rx="1" fill="#5a9a5f" />
      <circle cx="18.500" cy="18" r="2" fill="none" stroke="#fff" strokeWidth="1.200" />
      <path d="M20 19.500l2.500 2.700" stroke="#fff" strokeWidth="1.400" />
    </Globe>
  ),
  python: (
    <Python>
      <path d="M17.500 17.500l5.500 2.700-5.500 2.800" fill="none" stroke="#444" strokeWidth="1.300" />
    </Python>
  ),
  pythonPlain: <Python />,
  help: (
    <g>
      <rect x="1.500" y="1" width="21" height="22" fill={BLUE} stroke="#16293f" strokeWidth="0.900" />
      <rect x="2" y="1.400" width="4.500" height="21.200" fill="#2b3a4b" />
      <text x="14.500" y="18" fontSize="17" fontFamily="Liberation Serif, serif" textAnchor="middle" fill="#fff">
        ?
      </text>
    </g>
  ),
  addLayer: (
    <g>
      <rect x="1.500" y="2" width="19" height="18.500" fill="#f3f3f3" stroke="#777" strokeWidth="1.200" />
      <AddBadge x={14.500} y={14.500} s={0.900} />
    </g>
  ),
  removeLayer: (
    <g>
      <rect x="1.500" y="2" width="19" height="18.500" fill="#f3f3f3" stroke="#777" strokeWidth="1.200" />
      <rect x="14" y="15.500" width="9.500" height="7" rx="1.500" fill="#f23c3c" />
      <path d="M16 19h5.500" stroke="#fff" strokeWidth="1.800" />
    </g>
  ),
  filter: <Funnel />,
  collapse: <TreeArrow />,
  expand: <TreeArrow down />,
  infoPlain: (
    <g>
      <circle cx="12" cy="12" r="10.800" fill={BLUE} stroke="#46698f" strokeWidth="0.800" />
      <text x="11.800" y="18" fontSize="18" fontWeight="700" fontStyle="italic" fontFamily="Liberation Serif, serif" textAnchor="middle" fill="#fff">
        i
      </text>
    </g>
  ),
  brush: (
    <g>
      <path d="M1 10l8 10 4-5z" fill="#e02424" />
      <path d="M1 10l11-4 1 9z" fill="#7ea6d8" />
      <path d="M3 14l6-2 5 6-5 3z" fill="#f5c518" />
      <path d="M9 9l7 8-6 5-7-7c3 0 5-2 6-6z" fill="#e6b86c" stroke="#b07a2c" strokeWidth="0.700" />
      <path d="M10 9.500l3-2 5 5.500-2.500 3z" fill="#d08c3a" />
      <path d="M15.500 10L23 2.500" stroke="#c98b3c" strokeWidth="2.600" strokeLinecap="round" />
    </g>
  ),
  addGroup: (
    <g fill="none" stroke="#777" strokeWidth="1.200">
      <path d="M4 10H1v13h12v-2M7 7H4v12h11" />
      <rect x="7" y="3" width="14" height="13" fill="#f3f3f3" />
      <path d="M11 6v8c0 2 4 2 4 0V2c0-1.500-2.500-1.500-2.500 0v9" stroke="#3c6a9c" />
      <AddBadge x={14.500} y={14} s={0.900} />
    </g>
  ),
  eye: <Eye />,
  epsilon: (
    <g>
      <text x="6.500" y="14" fontSize="27" fontFamily="Liberation Serif, serif" fontWeight="700" textAnchor="middle" fill="#5c2a6b">
        ε
      </text>
      <path d="M14 23v-8h9v8M14 18.500h2.500v4.500H14zM20.500 18.500H23v4.500h-2.500z" fill="none" stroke="#999" strokeWidth="1.600" />
    </g>
  ),
  addFeature: (
    <g>
      <rect x="2" y="1.500" width="18" height="18" fill="#e9f4fc" stroke="#4f87c3" strokeWidth="0.900" />
      <rect x=".8" y="7" width="22" height="6" fill="#ddd8b8" stroke="#8f8544" strokeWidth="0.900" />
      <path d="M4 4.500h14M4 16h8" stroke="#4f87c3" />
      <StarBadge />
    </g>
  ),
  selectExpr: (
    <g>
      <rect x="8" y="9" width="14.500" height="14" fill={YELLOW} stroke={GOLD} strokeWidth="1" />
      <text x="6.500" y="14.500" fontSize="27" fontFamily="Liberation Serif, serif" fontWeight="700" textAnchor="middle" fill="#5c2a6b">
        ε
      </text>
    </g>
  ),
  selectAll: (
    <g fill={YELLOW} stroke={GOLD} strokeWidth="1.100">
      <rect x="1" y="1.500" width="22" height="6" />
      <rect x="1" y="9.200" width="22" height="6" />
      <rect x="1" y="17" width="22" height="6" />
    </g>
  ),
  invert: (
    <g>
      <path d="M2 2h20v20z" fill="#eee" stroke="#888" strokeWidth="1" />
      <path d="M2 2v20h20z" fill={YELLOW} stroke={GOLD} strokeWidth="1" />
    </g>
  ),
  moveTop: (
    <g>
      <TableGlyph />
      <rect x="2" y="17.500" width="20" height="5" fill={YELLOW} stroke={GOLD} />
      <path d="M10 19V10H6.500L12 3l5.500 7H14v9z" fill={BLUE} stroke={NAVY} strokeWidth="0.900" />
    </g>
  ),
  panTo: (
    <g>
      <rect x="2" y="2" width="16" height="18" fill={YELLOW} stroke={GOLD} />
      <path d="M12 .5l4 5h-2.500V10H18V7.500l5.500 4.500L18 16.500V14h-4.500v4.500H16l-4 5-4-5h2.500V14H6v2.500L.5 12 6 7.500V10h4.500V5.500H8z" fill={BLUE} stroke={NAVY} strokeWidth="0.800" />
    </g>
  ),
  zoomTo: (
    <g>
      <rect x="3" y="2.500" width="12" height="15" fill={YELLOW} stroke={GOLD} />
      <Lens />
    </g>
  ),
  newField: (
    <g>
      <TableGlyph />
      <rect x="5" y="1" width="6" height="22" fill="#ddd8b8" stroke="#8f8544" />
      <StarBadge />
    </g>
  ),
  deleteField: (
    <g>
      <TableGlyph />
      <rect x="5" y="1" width="6" height="22" fill="#ddd8b8" stroke="#8f8544" />
      <rect x="12.500" y="13" width="10.500" height="10" rx="1.500" fill="#c77" />
      <path d="M15 15.500l5.500 5.500M20.500 15.500L15 21" stroke="#fff" strokeWidth="1.700" />
    </g>
  ),
  organize: (
    <g>
      <TableGlyph />
      <path d="M18 1l4 2.500L10.500 20 6 23l.8-5.500z" fill="#d9642a" stroke="#7e3510" strokeWidth="0.800" />
    </g>
  ),
  condFormat: (
    <g strokeWidth="1">
      <rect x="1.500" y="2" width="21" height="5" fill="#fff" stroke="#999" />
      <rect x="1.500" y="9.500" width="21" height="5" fill="#a8dfa8" stroke="#4a9a4a" />
      <rect x="1.500" y="17" width="21" height="5" fill="#fff" stroke="#999" />
      <path d="M9 4.500h10M9 12h10" stroke="#444" />
      <path d="M4 19.500h4" stroke="#c01010" strokeWidth="2" />
      <path d="M9 19.500h11" stroke="#f5a9a9" strokeWidth="2" />
    </g>
  ),
  dock: (
    <g>
      <rect x="4" y="1.500" width="18.500" height="17" fill="#f7f7f7" stroke="#666" />
      <rect x="4" y="1.500" width="18.500" height="4" fill="#555" />
      <rect x="1.500" y="9" width="16" height="13.500" fill="#e9f4fc" stroke="#4f87c3" />
      <rect x="2" y="9.500" width="15" height="3" fill="#b9e1f7" />
      <path d="M4 15h4M10 15h5M4 17.500h4M10 17.500h5M4 20h4M10 20h5" stroke="#4f87c3" />
    </g>
  ),
  formView: (
    <g>
      <rect x="1.500" y="1.500" width="21" height="21" fill="#eef5fb" stroke="#6fa0cf" strokeWidth="1" />
      <rect x="10.500" y="4.500" width="9.500" height="6" fill="#fff" stroke="#6fa0cf" />
      <rect x="10.500" y="13.500" width="9.500" height="6" fill="#fff" stroke="#6fa0cf" />
      <path d="M4 7.500h5M4 16.500h5" stroke={NAVY} strokeWidth="1.800" />
    </g>
  ),
  models: (
    <g>
      <g transform="scale(.66) translate(-2 -2)">
        <Gear fill="#d91f1f" stroke="#d91f1f" />
      </g>
      <g transform="translate(12 7) scale(.5)">
        <Gear fill="#777" stroke="#777" />
      </g>
      <g transform="translate(5 14) scale(.44)">
        <Gear />
      </g>
    </g>
  ),
  history: <Clock />,
  results: (
    <g>
      <path d="M4 1h11l5 5v17H4z" fill="#fff" stroke="#777" strokeWidth="1" />
      <path d="M15 1v5h5M6.500 8h8M6.500 11.500h11M6.500 15h9M6.500 18.500h10" fill="none" stroke="#666" strokeWidth="1.200" />
    </g>
  ),
  editInPlace: (
    <g>
      <SelectBox w={15.500} />
      <g transform="translate(7.500 4) scale(.82)">
        <Pencil />
      </g>
    </g>
  ),
  wrench: (
    <g transform="translate(-1 -1) scale(1.150)">
      <Wrench />
    </g>
  ),
  qgis: (
    <g>
      <circle cx="11.500" cy="12" r="8.700" fill="none" stroke="#76a92b" strokeWidth="5" />
      <path d="M13 13l8.500 9.500" stroke="#fff" strokeWidth="6.500" />
      <path d="M14.500 15l7 7.500" stroke="#5c9b37" strokeWidth="4.200" />
      <path d="M9.500 9.500l4.500.5 3.500 4-3 2.500-4-3.500z" fill="#f9c623" />
      <path d="M9.500 9l3.500.5L13.500 12l-2.500 1.500L9.500 12z" fill="#ee7913" />
    </g>
  ),
  randomSel: (
    <g>
      <SelectBox />
      <text x="20.500" y="24" fontSize="14" fontWeight="700" textAnchor="middle" fill="#7593a9" fontFamily="Roboto, sans-serif">
        ?
      </text>
    </g>
  ),
  selectWithin: (
    <g>
      <rect x=".8" y=".8" width="22.400" height="22.400" fill={YELLOW} stroke={GOLD} strokeWidth="1.200" />
      <rect x="5" y="5" width="14" height="14" fill="#7fa67f" stroke={GOLD} strokeWidth="1" />
    </g>
  ),
  gdal: (
    <g>
      <circle cx="14" cy="14" r="9" fill="#63c3e8" />
      <path d="M9 8c3-2 6-1 8 0l-2 4-4 1zM16 14l4-1 1 4-3 3z" fill="#3e7d3a" />
      <path d="M9 9l6 1-1 4z" fill="#a5512a" />
      <path d="M1 9L12 1M5 3l4 4" stroke="#222" strokeWidth="2.400" />
      <text x="12" y="24" fontSize="10.500" fontWeight="700" textAnchor="middle" fill="#111" fontFamily="Roboto, sans-serif">
        GDAL
      </text>
    </g>
  ),
  grass: (
    <g>
      <path d="M12 1l11 11-11 11L1 12z" fill="#fff" stroke="#444" strokeWidth="1" />
      <path d="M12 20V5M12 18L7 9M12 18l5-9" stroke="#2da12d" strokeWidth="1.600" />
    </g>
  ),
  tableGrey: (
    <g>
      <rect x="1.500" y="1" width="21" height="22" rx="1" fill="#f3f3f3" stroke="#77776f" strokeWidth="1.300" />
      <path d="M1.500 7.500h21M4 4.300h6.500M13 4.300h6.500M4 11h6.500M13 11h6.500M4 15h6.500M13 15h6.500M4 19h6.500M13 19h6.500" stroke="#77776f" strokeWidth="1.200" />
    </g>
  ),
  polygon: <path d="M1.500 4c3-2.500 5 1.500 10.500 1s8-4 10.500-1.500c1.500 3 .5 9-.5 13-3 2-7-2-11-1.500s-6 3.500-9 1.500C.5 12 .5 6.500 1.500 4z" fill="#dededc" stroke="#77776f" strokeWidth="1.300" />,
  points: (
    <g fill="#f3f3f3" stroke="#77776f" strokeWidth="1.300">
      <circle cx="5" cy="19" r="1.800" />
      <circle cx="8.500" cy="8.500" r="1.800" />
      <circle cx="20" cy="4" r="1.800" />
    </g>
  ),
  raster: (
    <g>
      <rect x="2" y="2" width="21" height="20" fill="#a9c6e3" />
      <path d="M2 2h7v6.500H2zM16 2h7v6.500h-7zM9 8.500h7V15H9zM2 15h7v7H2z" fill="#25364d" />
      <path d="M16 15h7v7h-7z" fill="#fff" />
    </g>
  ),
  line: <VLine color="#77776f" w={1.300} />,
  tracking: (
    <g>
      <rect x="4" y="0" width="9" height="14" rx="4" fill="#222" transform="rotate(-28 8 7)" />
      <path d="M6 3l5 9M9.500 2l4.500 8" stroke="#fff" strokeWidth="1.200" />
      <circle cx="14" cy="17.500" r="5.500" fill="#fff" stroke="#111" strokeWidth="2.200" />
      <circle cx="14.500" cy="18" r="1.800" fill="#111" />
      <path d="M15 3.500h3M20 1.500h2M20 4h1M1 16h1.500M4 18h1.500M18 8l2-1.500" stroke="#111" strokeWidth="1.600" />
    </g>
  ),
  lock: (
    <g>
      <path d="M7 11V6.500C7 0 17 0 17 6.500V11" fill="none" stroke="#8c8c8c" strokeWidth="2.600" />
      <rect x="3.500" y="10.500" width="17" height="13" rx="2" fill="#5b5b5b" />
    </g>
  ),
  crs: (
    <g fill="none" stroke="#666" strokeWidth="1.500">
      <path d="M12 1v22M1 12h22M3 7.500h18M3 16.500h18" />
      <ellipse cx="12" cy="12" rx="5.500" ry="10.500" />
      <path d="M4 6L12 2.500 20 6l3 6-4 8-7 3-7-3-4-8z" />
    </g>
  ),
  bubble: (
    <g>
      <ellipse cx="12" cy="10.500" rx="11.500" ry="9.500" fill="#5b5b5b" />
      <path d="M13 19l8 4.500-2-8z" fill="#5b5b5b" />
      <g fill="#fff">
        <circle cx="7" cy="10.500" r="1.500" />
        <circle cx="12" cy="10.500" r="1.500" />
        <circle cx="17" cy="10.500" r="1.500" />
      </g>
    </g>
  ),
};

const Icon = ({ name, className = "size-[26px]" }) => (
  <svg viewBox="0 0 24 24" className={clsx("shrink-0 overflow-visible", className)} aria-hidden="true">
    {ICONS[name]}
  </svg>
);

const Caret = ({ dir = "down", className = "h-[9px] w-[14px]" }) => (
  <svg viewBox="0 0 14 9" className={clsx("shrink-0", className)} aria-hidden="true">
    <path d={dir === "down" ? "M0 0h14L7 9z" : "M0 9h14L7 0z"} fill="#4d4d4d" />
  </svg>
);

const SideCaret = ({ dir = "right" }) => (
  <svg viewBox="0 0 8 14" className="h-[14px] w-2 shrink-0" aria-hidden="true">
    <path d={dir === "right" ? "M0 0v14l8-7z" : "M8 0v14L0 7z"} fill="#5a5a5a" />
  </svg>
);

const Grip = () => (
  <span className="flex h-[54px] w-[22px] items-center justify-center">
    <svg viewBox="0 0 8 32" className="h-8 w-2" aria-hidden="true">
      <path d="M1 0v32M7 0v32" stroke="#b4b4b4" strokeWidth="2" strokeDasharray="2 4" />
    </svg>
  </span>
);

const ToolButton = ({ name, off, on, framed, menu }) => (
  <button
    type="button"
    aria-label={name}
    className={clsx(
      "relative flex h-[54px] w-[54px] items-center justify-center rounded-[5px]",
      on && "border-2 border-[#adadad] bg-[#d9d9d9]",
      framed && "border-2 border-[#adadad] bg-gradient-to-b from-white to-[#f3f3f3]"
    )}
  >
    <Icon name={name} className={off ? "size-[38px] opacity-30 grayscale-[65%]" : "size-[38px]"} />
    {menu && <Caret className="absolute right-1 bottom-1 h-[6px] w-[10px]" />}
  </button>
);

const DropButton = ({ framed }) => (
  <button
    type="button"
    aria-label="more"
    className={clsx(
      "-ml-0.5 flex h-[54px] w-5 items-center justify-center rounded-[5px]",
      framed && "border-2 border-[#adadad] bg-gradient-to-b from-white to-[#f3f3f3]"
    )}
  >
    <Caret className="h-2 w-3" />
  </button>
);

// "|" separator, "v" drop-down, "V" framed drop-down, "-" disabled, "*" pressed, "#" framed, "+" with menu mark
const toolbarOne = [
  "newFile open save layout manager style",
  "*hand -pan zoomIn zoomOut zoomFull -zoomSel zoomLayer -zoomNative zoomLast -zoomNext newMap new3d newBookmark bookmarks clock refresh",
  "select v #selectForm V deselect v #selectLoc V",
  "info abacus *gear sigma table v measure v tip -gearPlay v",
];

const toolbarTwo = [
  "dataSource geopackage shapefile feather memory virtual mesh",
  "-+pencils pencil -saveEdits -digitize v -addPoint -vertex v -multiEdit -trash -cut -copy -paste -undo -redo",
  "label diagram | labelPin labelRed | -tagPin -tagEye -tagMove -tagRotate -tagEdit",
  "metasearch globeAdd globeSearch",
  "python",
  "help",
  "",
];

const Toolbar = ({ groups }) => (
  <div className="flex h-[65px] shrink-0 items-center gap-[9px] border-b-2 border-[#b9b9b9] bg-gradient-to-b from-[#f6f6f6] to-[#ebebeb]">
    {groups.map((group, gi) => (
      <div key={gi} className="flex items-center">
        <Grip />
        <div className="flex items-center gap-0.5">
          {group.split(" ").filter(Boolean).map((item, i) => {
            if (item === "|") return <span key={i} className="mx-1 h-9 w-0.5 bg-[#d2d2d2]" />;
            if (item === "v" || item === "V") return <DropButton key={i} framed={item === "V"} />;
            return (
              <ToolButton
                key={i}
                name={item.replace(/[^A-Za-z0-9]/g, "")}
                off={item.includes("-")}
                on={item.includes("*")}
                framed={item.includes("#")}
                menu={item.includes("+")}
              />
            );
          })}
        </div>
      </div>
    ))}
  </div>
);

const DockTitle = ({ title, className }) => (
  <div className={clsx("flex h-9 items-center justify-between pr-[3px] text-[19px] text-[#262626]", className)}>
    <h2>{title}</h2>
    <div className="flex gap-[5px]">
      <button type="button" aria-label="Float" className="flex size-[19px] items-center justify-center rounded-[4px] border-2 border-[#7a7a74] bg-[#f4f4f4]">
        <svg viewBox="0 0 12 12" className="size-[13px]" aria-hidden="true">
          <path d="M4.500 1h6v6h-6zM1.500 5h5.500v6H1.500z" fill="#f4f4f4" stroke="#6b6b66" strokeWidth="1.300" />
        </svg>
      </button>
      <button type="button" aria-label="Close" className="flex size-[19px] items-center justify-center rounded-[4px] border-2 border-[#7a7a74] bg-[#f4f4f4]">
        <svg viewBox="0 0 12 12" className="size-[13px]" aria-hidden="true">
          <path d="M1.500 1.500l9 9M10.500 1.500l-9 9" stroke="#5f5f5a" strokeWidth="3" />
        </svg>
      </button>
    </div>
  </div>
);

const SmallButton = ({ name, off, on, menu }) => (
  <button
    type="button"
    aria-label={name}
    className={clsx("relative flex h-10 w-[41px] items-center justify-center rounded-[5px]", on && "border-2 border-[#adadad] bg-[#d9d9d9]")}
  >
    <Icon name={name} className={off ? "size-[26px] opacity-30 grayscale-[65%]" : "size-[26px]"} />
    {menu && <Caret className="absolute right-0 bottom-1 h-[6px] w-[10px]" />}
  </button>
);

const SmallBar = ({ items, className }) => (
  <div className={clsx("mb-1 flex h-12 shrink-0 items-center gap-0.5", className)}>
    {items.split(" ").map((item, i) => {
      if (item === "|") return <span key={i} className="mx-[3px] h-[26px] w-0.5 bg-white" />;
      if (item === "v")
        return (
          <button key={i} type="button" aria-label="more" className="-ml-0.5 flex h-10 w-[18px] items-center justify-center">
            <Caret className="h-[7px] w-3" />
          </button>
        );
      return (
        <SmallButton key={i} name={item.replace(/[^A-Za-z0-9]/g, "")} off={item.includes("-")} on={item.includes("*")} menu={item.includes("+")} />
      );
    })}
  </div>
);

const browserItems = [
  ["tableGrey", "Blocks_Table"],
  ["polygon", "BX_FourCDs"],
  ["points", "Points1"],
  ["raster", "Points1_Kdens_DecB"],
  ["points", "Points1_Table1_join"],
  ["tableGrey", "StandardDataGeopackage"],
  ["points", "subway_entrances"],
  ["line", "subways"],
  ["tableGrey", "Table1"],
  ["polygon", "Tracts"],
];

const Browser = () => (
  <section>
    <DockTitle title="Browser" className="pl-[7px]" />
    <SmallBar items="addLayer refresh filter collapse infoPlain" className="pl-[5px]" />
    <div className="border border-[#b9b9b9] bg-white">
      <div className="flex h-[307px]">
        <ul className="grid h-[306px] min-w-0 flex-1 auto-rows-fr overflow-hidden text-[22px] text-[#262626]">
          {browserItems.map(([icon, name]) => (
            <li
              key={name}
              className={clsx("flex min-h-0 items-center whitespace-nowrap pl-[125px]", name === "subway_entrances" && "bg-[#dcdcdc] text-black")}
            >
              <span className="w-[22px]">{icon !== "raster" && <SideCaret />}</span>
              <Icon name={icon} className="mr-[11px] size-[26px]" />
              {name}
            </li>
          ))}
        </ul>
        <div className="flex w-6 flex-col border-l border-[#b9b9b9] bg-[#e1e1e1]">
          <button type="button" aria-label="Scroll up" className="flex h-[22px] items-center justify-center border-b border-[#b9b9b9] bg-[#f7f7f7]">
            <Caret dir="up" className="h-2 w-3" />
          </button>
          <div className="mt-[31px] h-[46px] border-y border-[#b9b9b9] bg-[#fafafa]" />
          <div className="flex-1" />
          <button type="button" aria-label="Scroll down" className="flex h-6 items-center justify-center border-t border-[#b9b9b9] bg-[#f7f7f7]">
            <Caret className="h-2 w-3" />
          </button>
        </div>
      </div>
      <div className="flex h-6 border-t border-[#b9b9b9] bg-[#e1e1e1]">
        <button type="button" aria-label="Scroll left" className="flex w-6 items-center justify-center border-r border-[#b9b9b9] bg-[#f7f7f7]">
          <SideCaret dir="left" />
        </button>
        <div className="ml-2 w-[184px] border-x border-[#b9b9b9] bg-[#fafafa]" />
        <div className="flex-1" />
        <button type="button" aria-label="Scroll right" className="flex w-6 items-center justify-center border-x border-[#b9b9b9] bg-[#f7f7f7]">
          <SideCaret />
        </button>
        <div className="w-[23px] bg-[#ebebeb]" />
      </div>
    </div>
  </section>
);

const Check = ({ id }) => (
  <span className="relative flex size-[22px]">
    <input id={id} type="checkbox" defaultChecked className="size-[22px] appearance-none border border-[#a3a3a3] bg-white" />
    <svg viewBox="0 0 22 22" className="pointer-events-none absolute inset-0 size-[22px]" aria-hidden="true">
      <path d="M5 11l4 6L17 4.500" fill="none" stroke="#1a1a1a" strokeWidth="2.600" />
    </svg>
  </span>
);

const Layers = () => (
  <section className="flex min-h-0 flex-1 flex-col">
    <DockTitle title="Layers" className="pl-[7px]" />
    <SmallBar items="brush addGroup +eye +filter epsilon v expand collapse removeLayer" className="pl-[5px]" />
    <ul className="flex-1 border border-[#b9b9b9] bg-white text-[22px] font-bold text-[#262626]">
      <li className="flex h-[31px] items-center pl-10">
        <Check id="layer-subway" />
        <span className="mx-[13px] size-[25px] rounded-full border-2 border-[#35608f] bg-[#4a7ab5]" />
        <label htmlFor="layer-subway">subway_entrances</label>
      </li>
      <li className="flex h-[31px] items-center bg-[#dcdcdc] pl-10 text-black">
        <Check id="layer-points" />
        <span className="mx-[18px] size-[15px] rounded-full border border-[#a3202a] bg-[#dc1f2b]" />
        <label htmlFor="layer-points" className="underline underline-offset-4">
          Points1_Table1_join
        </label>
      </li>
    </ul>
  </section>
);

// survey points are kept per block of the canvas: origin, units per pixel, "x,y" pairs
const blocks = [
  {
    x: 354,
    y: 2,
    sx: 3,
    sy: 3,
    red: "447,87 467,100 531,130 490,149 355,144 413,161 416,195 286,164 314,222 161,261 228,253 230,284 261,282 279,304 340,304 368,281 87,353 99,334 136,332 164,327 202,322 214,326 72,406 126,426 123,427 266,406 273,427 312,402 343,429 355,350 383,368 434,317 452,328 433,341 429,370 490,345 483,373 505,391 470,411 531,312 529,246 574,363 592,212 615,187 626,200 638,164 659,116 658,133 678,102 700,129 703,132 689,149 738,126 738,166 730,190 692,192 648,236 616,276 596,314 657,329 747,238 840,103 829,129 919,113 934,102 952,180 984,187 996,195 1006,204 1015,238 987,253 949,264 975,281 947,297 1018,284 801,200 815,224 804,238 863,228 873,258 888,270 880,296 880,304 763,289 786,304 758,330 817,330 720,339 697,362 727,388 732,421 672,411 965,345 975,373 1016,363 1026,401 633,443 626,464 779,450 807,447 835,447 860,432 870,459 903,444 957,434 952,464 1006,462 582,486 555,495 474,491 95,462 114,462 90,491 131,495 153,513 189,478 296,462 312,480 399,531 440,540 110,549 51,567 179,570 36,621 48,626 57,661 82,687 110,685 99,720 128,643 199,649 261,618 296,651 187,699 230,694 212,720 153,741 161,758 48,784 103,778 110,768 120,799 250,746 220,775 211,793 218,804 264,818 276,839 250,848 324,863 113,868 143,891 194,893 201,913 135,1003 151,996 154,996 189,1013 223,993 276,1005 110,1047 358,697 391,758 424,728 441,743 447,694 467,712 465,659 424,773 450,807 424,825 503,881 501,952 416,957 366,993 401,993 452,1005 475,1020 441,1040 363,1040 594,537 582,544 582,554 641,531 546,585 492,592 505,572 580,592 588,600 666,565 710,572 732,564 778,528 804,505 807,492 852,508 868,511 926,539 822,559 794,610 834,610 829,628 580,633 594,646 643,633 643,657 672,646 672,632 689,618 544,674 697,677 704,682 618,705 755,699 557,723 575,738 677,738 725,756 742,758 610,773 643,794 758,817 661,834 682,840 694,840 717,855 649,881 765,891 705,913 585,924 559,947 580,952 590,980 612,990 600,1016 643,1046 671,947 682,958 677,975 765,951 763,960 753,988 773,1018 812,1042 840,712 875,722 873,746 912,651 930,646 942,652 955,630 942,638 984,633 987,638 921,680 918,690 924,720 993,776 903,845 937,888 928,901 915,900 903,906 883,935 911,935 1026,847 1011,881 996,909 1001,932 942,967 931,993 921,1005 990,983 1008,1020 969,1034 1036,531 1031,569 1024,699 1041,699",
    blue: "607,87 607,101 714,76 722,77 508,282 513,277 664,288 648,276 624,327 638,342 405,455 395,447 502,502 508,493 517,506 526,498 461,559 477,567 267,771 258,778 252,788 312,789 315,786 243,793",
  },
  {
    x: 694,
    y: 2,
    sx: 3,
    sy: 3,
    red: "105,161 161,187 95,207 32,243 172,245 231,231 95,266 136,273 161,281 202,278 176,293 195,294 243,291 312,291 312,330 383,330 39,337 77,340 98,327 146,317 98,360 146,355 176,348 205,353 128,378 46,418 195,401 195,418 225,404 248,418 355,393 312,414 41,465 69,480 164,462 200,465 159,492 299,472 294,511 322,531 195,541 95,561 98,585 100,589 82,605 143,561 156,574 266,577 322,592 304,606 294,627 263,633 164,640 202,663 46,687 21,699 113,692 57,720 143,715 128,781 187,779 243,768 261,792 251,804 289,794 320,761 342,766 304,731 368,738 401,770 416,763 429,768 419,840 460,883 487,852 501,860 327,876 253,890 230,918 120,937 95,955 54,843 202,957 205,965 299,967 345,963 348,985 378,963 383,944 264,988 278,1008 289,1018 312,1011 222,1021 245,1028 212,1042 401,1024 487,983 501,1011 503,291 482,320 526,320 465,345 567,355 607,383 618,391 490,388 485,403 503,418 450,405 381,427 404,440 376,455 537,450 557,478 592,465 483,478 376,496 473,508 501,506 526,518 366,524 376,540 376,552 351,551 370,561 404,564 437,570 393,582 496,551 501,554 478,605 489,605 360,641 419,636 404,656 442,666 283,715 16,531 11,569 457,1056",
    blue: "419,380 416,386 426,387 434,388 288,674 290,688 304,681 469,796 471,797 250,932 264,918 267,926 146,995 143,1006",
  },
  {
    x: 354,
    y: 342,
    sx: 2.272,
    sy: 3,
    red: "116,41 69,62 354,59 304,74 214,72 139,90 180,100 124,110 83,113 62,138 348,103 383,107 416,102 411,136 413,163 396,180 413,190 427,209 197,149 102,182 87,191 73,200 197,197 120,233 110,230 214,250 306,228 280,236 296,262 294,271 46,279 137,279 214,309 276,314 367,282 411,292 440,299 149,322 145,345 149,363 180,342 90,375 331,338 353,338 453,44 470,65 495,62 611,40 498,146 534,125 537,177 539,222 597,82 610,102 636,93 655,79 669,114 688,100 636,131 596,236 584,271 595,297 633,286 680,304 717,276 669,177 690,177 715,189 729,202 771,233 798,77 783,127 800,128 829,118 806,44 850,44 900,44 987,70 1016,105 966,146 889,265 941,266 961,263 955,273 967,296 976,327 966,338 1003,345 1020,312 972,378 1001,383 1074,48 1077,67 1059,82 1081,96 1081,124 1082,146 1120,40 1108,49 1120,55 1042,160 1042,186 1032,195 1065,207 1100,205 1176,152 1245,180 1229,207 1202,251 1273,228 1308,220 1338,246 1340,286 1297,284 1293,312 1134,268 1163,261 1069,263 1062,268 1105,292 1097,318 1086,338 1062,332 1154,320 1117,362 1136,381 1168,365 1100,404 1235,342 1138,434 1188,449 1187,454 1277,456 1287,453 1336,360 1364,353 1382,375 1407,376 1397,322 1463,355 1484,394 1457,397 1432,408 1336,419 1336,430 1384,447 1331,488 172,399 197,404 241,407 89,424 152,428 145,460 235,473 170,489 83,483 112,483 66,516 280,503 154,537 172,537 164,544 213,547 306,544 329,498 352,478 358,450 383,432 425,476 458,485 452,466 473,441 514,444 496,460 539,458 558,458 547,424 568,399 508,373 468,396 608,458 429,531 514,544 557,537 383,557 385,579 383,605 322,599 331,635 275,608 275,629 232,643 100,610 85,615 110,654 131,659 124,669 277,685 282,692 236,710 228,720 257,735 292,746 437,610 394,633 391,652 410,654 429,656 387,680 465,659 532,635 546,651 535,650 522,669 601,615 600,633 590,641 628,626 636,659 602,674 632,697 729,687 713,712 723,720 685,715 676,726 676,754 688,759 375,751 394,764 437,771 479,743 484,758 503,758 512,782 481,789 551,781 576,768 576,796 574,794 562,837 381,822 433,815 411,827 409,832 443,865 462,863 433,897 396,905 388,909 399,927 416,929 405,955 460,935 501,947 572,904 547,929 563,929 580,939 578,955 479,1001 484,1006 495,1021 761,386 715,460 754,460 783,446 796,475 795,491 765,491 713,531 729,567 765,595 761,631 775,631 840,483 862,478 829,511 893,523 876,531 854,535 848,560 862,570 833,610 833,654 899,633 850,401 901,363 911,367 888,411 896,411 923,412 926,409 951,427 991,445 993,470 1026,480 1016,513 952,540 1010,636 1092,641 837,809 866,845 1097,572 1134,582 1143,594 1156,582 1175,570 1188,564 1191,597 1195,610 1170,498 1206,496 1218,500 1233,528 1268,531 1262,547 1293,534 1401,528 1387,567 1425,538 1449,526 1447,547 1441,534 1486,560 1498,552 1523,560 1484,593 1443,618 1463,615 1355,610 1349,612 1509,669 1407,669 1376,697 1351,712 1362,735 1413,720 1422,774 1384,792 1408,804 1345,817 1300,756 1271,731 1264,694 1229,643 1229,656 1227,680 1225,705 1216,728 1187,664 1145,674 1140,694 1138,766 1163,764 1161,802",
    blue: "164,138 157,145 388,228 388,236 387,242 616,226 622,215 630,203 766,80 762,98 770,88 890,218 893,228 897,222 1028,41 1020,48 1003,50 102,345 106,353 207,475 178,448 174,455 350,577 356,583 353,590 711,386 709,402 713,397 618,550 622,560 626,550 482,680 491,678 487,684",
  },
];

const parse = (b, key) =>
  b[key].split(" ").map((pair) => {
    const [px, py] = pair.split(",").map(Number);
    return [b.x + px / b.sx, b.y + py / b.sy];
  });

const MapCanvas = () => (
  <main className="min-h-0 flex-1 overflow-hidden border border-[#b9b9b9] bg-white">
    <svg viewBox="0 0 1388 690" className="h-full w-full" role="img" aria-label="Map canvas">
      <g fill="#dc1f2b" stroke="#7c1a24" strokeWidth="0.900">
        {blocks.flatMap((b) => parse(b, "red")).map(([x, y], i) => (
          <circle key={i} cx={x} cy={y} r="4.500" />
        ))}
      </g>
      <g fill="#4a7ab5" stroke="#315a86" strokeWidth="1.500">
        {blocks.flatMap((b) => parse(b, "blue")).map(([x, y], i) => (
          <circle key={i} cx={x} cy={y} r="10" />
        ))}
      </g>
    </svg>
  </main>
);

const columns = ["fid", "lat_ft", "lon_ft", "lat_dd", "lon_dd", "pointid", "dec_a", "dec_b"];

const features = [
  ["1", "237550.397…", "1004539.38", "40.818673291", "-73.926696…", "1", "0.783612531", "5.894669"],
  ["2", "244658.484…", "1003216.780…", "40.8381858…", "-73.9314551…", "2", "0.76929425", "-35.099884"],
  ["3", "241722.3987…", "1008716.9287", "40.8301136…", "-73.9115886…", "3", "0.637832359", "-15.994214"],
  ["4", "244999.407…", "1007787.05916", "40.8391106…", "-73.9149372…", "4", "0.349935015", "31.23555"],
  ["5", "242940.702…", "1007644.85…", "40.8334604…", "-73.9154583…", "5", "0.03800171", "43.613554"],
  ["6", "245186.473…", "1010322.735…", "40.8396169…", "-73.9057725…", "6", "0.494481684", "-4.2418"],
];

const AttributeTable = () => (
  <section className="flex shrink-0 flex-col">
    <DockTitle title="Points1_Table1_join — Features Total: 800,Filtered: 800,Selected: 0" className="pl-3" />
    <SmallBar
      items="pencil -multiEdit -saveEdits refresh | -+addFeature -trash -cut -copy -paste | selectExpr selectAll invert deselect filter moveTop panTo zoomTo | -newField -deleteField organize abacus | condFormat | gearPlay *dock"
      className="pl-[5px]"
    />
    <div className="border border-[#b9b9b9] bg-white">
      <div className="flex h-[322px]">
        <div className="min-w-0 flex-1 overflow-hidden">
          <table className="w-[1407px] table-fixed border-collapse text-right text-[23px] text-[#262626]">
            <colgroup>
              <col className="w-[47px]" />
              {columns.map((c) => (
                <col key={c} className="w-[170px]" />
              ))}
            </colgroup>
            <thead>
              <tr className="h-7 bg-gradient-to-b from-[#fafafa] to-[#ececec] text-[19px] leading-6 text-black">
                <th className="border-b-2 border-[#b4b4b4]" aria-label="row" />
                {columns.map((c) => (
                  <th key={c} className="border-r border-b-2 border-[#b4b4b4] text-center font-normal">
                    {c}
                  </th>
                ))}
              </tr>
            </thead>
            <tbody>
              {features.map((row, i) => (
                <tr key={i} className="h-[51px] odd:bg-white even:bg-[#f4f6f6]">
                  <th className="border-r-2 border-b-2 border-[#adadad] bg-gradient-to-b from-[#f9f9f9] to-[#e9e9e9] pl-1 text-left text-[20px] font-normal text-black">
                    {i + 1}
                  </th>
                  {row.map((cell, j) => (
                    <td
                      key={j}
                      className={clsx(
                        "border-r border-b border-[#c8c8c8] pb-[3px] whitespace-nowrap",
                        j < 7 ? "pr-[5px]" : cell.endsWith("4") ? "pr-9" : "pr-11"
                      )}
                    >
                      {cell}
                    </td>
                  ))}
                </tr>
              ))}
            </tbody>
          </table>
        </div>
        <div className="flex w-6 flex-col border-l border-[#b9b9b9] bg-[#e1e1e1]">
          <button type="button" aria-label="Scroll up" className="flex h-[22px] items-center justify-center border-b border-[#b9b9b9] bg-[#f7f7f7]">
            <Caret dir="up" className="h-2 w-3" />
          </button>
          <div className="h-[46px] border-b-2 border-[#b9b9b9] bg-[#fafafa]" />
          <div className="flex-1" />
          <button type="button" aria-label="Scroll down" className="flex h-6 items-center justify-center border-t border-[#b9b9b9] bg-[#f7f7f7]">
            <Caret className="h-2 w-3" />
          </button>
        </div>
      </div>
      <div className="flex h-6 border-t border-[#b9b9b9] bg-[#e1e1e1]">
        <button type="button" aria-label="Scroll left" className="flex w-6 items-center justify-center border-r border-[#b9b9b9] bg-[#f7f7f7]">
          <SideCaret dir="left" />
        </button>
        <div className="w-[849px] border-r border-[#b9b9b9] bg-[#fafafa]" />
        <div className="flex-1" />
        <button type="button" aria-label="Scroll right" className="flex w-6 items-center justify-center border-x border-[#b9b9b9] bg-[#f7f7f7]">
          <SideCaret />
        </button>
        <div className="w-[23px] bg-[#ebebeb]" />
      </div>
    </div>
    <div className="flex h-[50px] items-center pr-1 pl-[5px]">
      <button
        type="button"
        className="relative flex h-[38px] w-[203px] items-center gap-[7px] rounded-[4px] border-2 border-[#adadad] bg-gradient-to-b from-white to-[#f0f0f0] pl-1 text-[17px] text-[#262626]"
      >
        <Icon name="table" className="size-[25px]" />
        Show All Features
        <Caret className="absolute right-0.5 bottom-0.5 h-[6px] w-[10px]" />
      </button>
      <div className="flex-1" />
      <div className="flex gap-0.5">
        <SmallButton name="formView" />
        <SmallButton name="table" on />
      </div>
    </div>
  </section>
);

const toolGroups = [
  "File tools",
  "GPS",
  "Interpolation",
  "Layer tools",
  "Mesh",
  "Network analysis",
  "Plots",
  "Raster analysis",
  "Raster creation",
  "Raster terrain analysis",
  "Raster tools",
  "Vector analysis",
  "Vector coverage",
  "Vector creation",
  "Vector general",
  "Vector geometry",
  "Vector overlay",
];

const selectionTools = [
  ["gear", "Extract by attribute"],
  ["gear", "Extract by expression"],
  ["gear", "Extract by location"],
  ["gear", "Extract within distance"],
  ["gear", "Filter by geometry type"],
  ["gear", "Random extract"],
  ["gear", "Random extract within subsets"],
  ["randomSel", "Random selection"],
  ["randomSel", "Random selection within subsets"],
  ["gear", "Select by attribute"],
  ["gear", "Select by expression"],
  ["selectLoc", "Select by location"],
  ["selectWithin", "Select within distance"],
];

const GroupRow = ({ name, icon = "qgis", open }) => (
  <li className="flex min-h-0 items-center whitespace-nowrap pl-3">
    <span className="flex w-[28px]">{open ? <Caret className="h-2 w-3" /> : <SideCaret />}</span>
    <Icon name={icon} className="mr-3 size-[25px]" />
    {name}
  </li>
);

const ProcessingToolbox = () => (
  <aside className="flex w-[613px] shrink-0 flex-col">
    <DockTitle title="Processing Toolbox" className="pl-1.5" />
    <SmallBar items="+models +pythonPlain history results | editInPlace | wrench" className="pl-1.5" />
    <div className="flex h-10 shrink-0 items-center rounded-[4px] border-2 border-[#adadad] bg-white pl-[13px]">
      <svg viewBox="0 0 24 24" className="size-[22px]" aria-hidden="true">
        <circle cx="9.500" cy="9.500" r="8" fill="none" stroke="#808080" strokeWidth="1.800" />
        <path d="M15.500 15.500l7 7.500" stroke="#808080" strokeWidth="2.400" />
      </svg>
      <input type="text" aria-label="Search" placeholder="Search…" className="ml-3 w-full bg-transparent text-[21px] outline-none placeholder:text-[#7d7d7d]" />
    </div>
    <div className="relative flex min-h-0 flex-1 overflow-hidden border border-[#b9b9b9] bg-white">
      <ul className="grid h-[1071px] min-w-0 flex-1 auto-rows-fr text-[22px] text-[#262626]">
        {toolGroups.map((name) => (
          <GroupRow key={name} name={name} />
        ))}
        <GroupRow name="Vector selection" open />
        {selectionTools.map(([icon, name]) => (
          <li key={name} className="flex min-h-0 items-center whitespace-nowrap pl-[74px]">
            <Icon name={icon} className="mr-3 size-[25px]" />
            {name}
          </li>
        ))}
        <GroupRow name="Vector table" />
        <GroupRow name="Vector tiles" />
        <GroupRow name="GDAL" icon="gdal" />
        <GroupRow name="GRASS" icon="grass" />
      </ul>
      <div className="absolute top-[824px] left-[52px] h-[130px] w-[437px] border-4 border-[#f04ff2]" />
      <div className="flex w-6 flex-col border-l border-[#b9b9b9] bg-[#e1e1e1]">
        <button type="button" aria-label="Scroll up" className="flex h-[22px] items-center justify-center border-b border-[#b9b9b9] bg-[#f7f7f7]">
          <Caret dir="up" className="h-2 w-3" />
        </button>
        <div className="mt-[106px] flex-1 border-y border-[#b9b9b9] bg-[#fafafa]" />
        <div className="h-[25px]" />
        <button type="button" aria-label="Scroll down" className="flex h-6 items-center justify-center border-t border-[#b9b9b9] bg-[#f7f7f7]">
          <Caret className="h-2 w-3" />
        </button>
      </div>
    </div>
  </aside>
);

const Spin = ({ id, value }) => (
  <div className="flex h-[39px] w-[156px] rounded-[4px] border-2 border-[#a6a6a6] bg-gradient-to-b from-white to-[#f1f1f1]">
    <input id={id} type="text" defaultValue={value} className="min-w-0 flex-1 bg-transparent pl-[6px] outline-none" />
    <div className="flex w-[23px] flex-col items-center justify-center gap-[7px] border-l border-[#a6a6a6]">
      <button type="button" aria-label="Increase">
        <Caret dir="up" className="h-[7px] w-3" />
      </button>
      <button type="button" aria-label="Decrease">
        <Caret className="h-[7px] w-3" />
      </button>
    </div>
  </div>
);

const StatusBar = () => (
  <footer className="flex h-[54px] shrink-0 items-center border-b-2 border-[#8b8b8b] bg-gradient-to-b from-[#ebebeb] to-[#d2d2d2] text-[19px] text-[#1c1c1c] [&_button]:flex">
    <div className="ml-2 flex h-10 w-[362px] items-center rounded-[4px] border-2 border-[#a6a6a6] bg-white pl-3">
      <svg viewBox="0 0 24 24" className="size-[22px]" aria-hidden="true">
        <circle cx="9.500" cy="9.500" r="8" fill="none" stroke="#808080" strokeWidth="1.800" />
        <path d="M15.500 15.500l7 7.500" stroke="#808080" strokeWidth="2.400" />
      </svg>
      <input type="text" aria-label="Locate" placeholder="Type to locate (⌘K)" className="ml-3 w-full bg-transparent text-[21px] outline-none placeholder:text-[#7d7d7d]" />
    </div>
    <div className="flex-1" />
    <label htmlFor="coord">Coordinate</label>
    <input
      id="coord"
      type="text"
      defaultValue="1029577,246307"
      className="ml-[6px] h-[37px] w-[187px] rounded-[4px] border-2 border-[#a6a6a6] bg-gradient-to-b from-white to-[#f1f1f1] text-center outline-none"
    />
    <button type="button" aria-label="Toggle extents" className="mx-1.5">
      <Icon name="tracking" className="size-7" />
    </button>
    <label htmlFor="scale" className="ml-4">
      Scale
    </label>
    <div className="relative ml-[7px] h-[39px] w-[158px]">
      <select id="scale" className="h-full w-full appearance-none rounded-[4px] border-2 border-[#a6a6a6] bg-gradient-to-b from-white to-[#f1f1f1] pl-[5px] outline-none">
        <option>1:39394</option>
      </select>
      <span className="pointer-events-none absolute inset-y-0.5 right-0.5 flex w-[33px] items-center justify-center border-l border-[#a6a6a6]">
        <Caret className="h-2 w-3" />
      </span>
    </div>
    <button type="button" aria-label="Lock scale" className="mr-3.5 ml-[18px]">
      <Icon name="lock" className="size-[27px]" />
    </button>
    <label htmlFor="magnifier" className="mr-[6px]">
      Magnifier
    </label>
    <Spin id="magnifier" value="100%" />
    <label htmlFor="rotation" className="mr-4 ml-[18px]">
      Rotation
    </label>
    <Spin id="rotation" value="0.0 °" />
    <span className="mr-[9px] ml-3 flex">
      <Check id="render" />
    </span>
    <label htmlFor="render">Render</label>
    <button type="button" className="mr-10 ml-[28px] items-center gap-1">
      <Icon name="crs" className="size-[26px]" />
      EPSG:2263
    </button>
    <button type="button" aria-label="Messages" className="mr-3">
      <Icon name="bubble" className="size-7" />
    </button>
  </footer>
);

const Splitter = ({ className }) => (
  <div className={clsx("flex shrink-0 items-center justify-center", className)}>
    <svg viewBox="0 0 28 2" className="h-0.5 w-7" aria-hidden="true">
      <path d="M0 1h28" stroke="#b4b4b4" strokeWidth="2" strokeDasharray="2 3" />
    </svg>
  </div>
);

export default function App() {
  return (
    <div className="h-screen w-full bg-[#1d5a5c] font-[Inter,sans-serif]">
      <div className="flex h-full flex-col overflow-hidden rounded-t-[12px] bg-[#ebebeb]">
        <header className="flex h-[45px] shrink-0 items-center border-b-2 border-[#dcdfdf] bg-[#eff3f3] px-[13px] pb-[3px]">
          <div className="flex flex-1 gap-[13px]">
            <button type="button" aria-label="Close window" className="size-[21px] rounded-full border border-[#d9574d] bg-[#ed6b60]" />
            <button type="button" aria-label="Minimise window" className="size-[21px] rounded-full border border-[#dfa63c] bg-[#f5bf4f]" />
            <button type="button" aria-label="Zoom window" className="size-[21px] rounded-full border border-[#4fae42] bg-[#61c554]" />
          </div>
          <h1 className="text-[22px] font-semibold text-[#3d3f3f]">*MoreSelections — QGIS</h1>
          <div className="flex-1" />
        </header>
        <Toolbar groups={toolbarOne} />
        <Toolbar groups={toolbarTwo} />
        <div className="flex min-h-0 flex-1">
          <div className="flex w-[474px] shrink-0 flex-col">
            <Browser />
            <Splitter className="h-[9px]" />
            <Layers />
          </div>
          <div className="w-[11px] shrink-0" />
          <div className="flex min-w-0 flex-1 flex-col pt-[2px]">
            <MapCanvas />
            <Splitter className="h-[9px]" />
            <AttributeTable />
          </div>
          <div className="w-3 shrink-0" />
          <ProcessingToolbox />
        </div>
        <StatusBar />
      </div>
    </div>
  );
}
